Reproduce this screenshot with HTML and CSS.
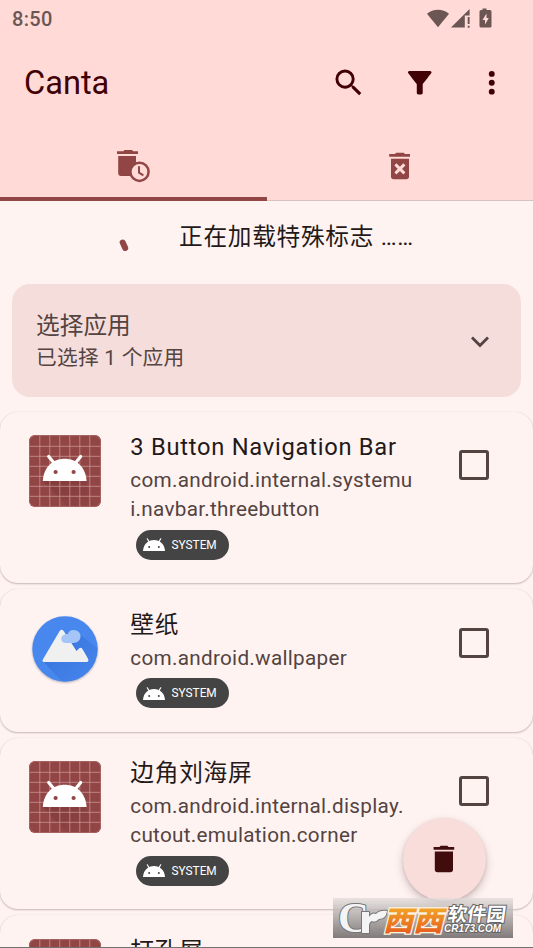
FILE: index.html
```html
<!DOCTYPE html>
<html lang="zh-CN">
<head>
<meta charset="utf-8">
<title>Canta</title>
<link rel="stylesheet" href="styles.css">
</head>
<body>
<svg class="defs" aria-hidden="true">
  <defs>
    <linearGradient id="orange" x1="0" y1="0" x2="0" y2="1"><stop offset="0" stop-color="#f6c02d"/><stop offset="1" stop-color="#e4501c"/></linearGradient>
    <linearGradient id="shade" x1="0" y1="0" x2="1" y2="1"><stop offset="0" stop-color="#591f22" stop-opacity=".45"/><stop offset="1" stop-color="#591f22" stop-opacity="0"/></linearGradient>
    <linearGradient id="cast" gradientUnits="userSpaceOnUse" x1="20" y1="22" x2="62" y2="64"><stop offset="0" stop-color="#2459c0" stop-opacity=".5"/><stop offset="1" stop-color="#2d67d2" stop-opacity=".1"/></linearGradient>
    <clipPath id="disc"><circle cx="36" cy="36" r="32.7"/></clipPath>
    <symbol id="robot" viewBox="0 0 72 72">
      <rect width="72" height="72" rx="6" fill="#914545"/>
      <path d="M14 46 27 60 39 72H66L57 46z" fill="url(#shade)" opacity=".6"/>
      <path d="M10.800 0V72M20.800 0V72M30.800 0V72M40.800 0V72M50.800 0V72M60.800 0V72M0 11.300H72M0 21.300H72M0 31.300H72M0 41.300H72M0 51.300H72M0 61.300H72" stroke="#d6a9a6" stroke-width=".8" opacity=".8"/>
      <rect x=".5" y=".5" width="71" height="71" rx="6" fill="none" stroke="#a86a68" stroke-width=".8"/>
      <path d="M13.800 46C14.500 32 24 23.700 35.700 23.700S56.800 32 57.600 46z" fill="#fff"/>
      <path d="M19.700 21.500 25.500 28.500M51.700 21.500 46 28.500" stroke="#fff" stroke-width="3.200" stroke-linecap="round"/>
      <circle cx="26.600" cy="37" r="2.100" fill="#914545"/><circle cx="44.600" cy="37" r="2.100" fill="#914545"/>
    </symbol>
    <symbol id="mini" viewBox="0 0 22 13">
      <path d="M0 13C.5 6 5 2 11 2s10.500 4 11 11z" fill="#fff"/>
      <path d="M4.300 .8 6.300 4.200M17.700 .8 15.700 4.200" stroke="#fff" stroke-width="1.200" stroke-linecap="round"/>
      <circle cx="6.200" cy="8.900" r="1" fill="#444"/><circle cx="15.800" cy="8.900" r="1" fill="#444"/>
    </symbol>
  </defs>
</svg>
<div class="screen">
  <header class="top">
    <div class="status">
      <span>8:50</span>
      <svg width="68" height="22" viewBox="0 0 68 22" fill="#6b5654">
        <path d="M1 6.800C7 1.400 17 1.400 23 6.800L12 20.200z"/>
        <path d="M25 20.500 43.600 2v6.600H38.800V20.500zM41.700 10H43.600V17H41.700zM41.700 18.700H43.600V20.700H41.700z"/>
        <path d="M56.500 1.500H60.500V3H64Q65.500 3 65.500 4.500V19Q65.500 20.500 64 20.500H55Q53.500 20.500 53.500 19V4.500Q53.500 3 55 3H56.500z"/>
        <path d="M60.500 6.500 56.500 13H59V17.500L62.800 11H60.500z" fill="#ffdad7"/>
      </svg>
    </div>
    <div class="bar">
      <h1>Canta</h1>
      <svg class="act" viewBox="0 0 24 24"><path d="M15.500 14h-.79l-.28-.27A6.470 6.470 0 0 0 16 9.500 6.500 6.500 0 1 0 9.500 16c1.610 0 3.090-.59 4.230-1.570l.27.28v.79l5 4.990L20.490 19l-4.990-5zm-6 0C7.010 14 5 11.990 5 9.500S7.010 5 9.500 5 14 7.010 14 9.500 11.990 14 9.500 14z"/></svg>
      <svg class="act" viewBox="0 0 24 24"><path d="M4.250 5.610C6.270 8.200 10 13 10 13v6c0 .55.45 1 1 1h2c.55 0 1-.45 1-1v-6s3.720-4.800 5.740-7.390A1 1 0 0 0 18.950 4H5.040a1 1 0 0 0-.79 1.610z"/></svg>
      <svg class="act" viewBox="0 0 24 24"><circle cx="12" cy="6" r="2"/><circle cx="12" cy="12" r="2"/><circle cx="12" cy="18" r="2"/></svg>
    </div>
    <nav class="tabs">
      <div class="tab active">
        <svg width="36" height="36" viewBox="0 0 36 36">
          <path d="M2 3.200H8.200L9.500 2h7.500l1.300 1.200H23V6H2zM3.200 8H21v7C17 17 15 20 15 24q0 2 .8 4H6Q3.200 28 3.200 25z" fill="#914545"/>
          <circle cx="24.500" cy="23.800" r="9.100" fill="none" stroke="#914545" stroke-width="2.500"/>
          <path d="M24 18.200V24.600L28.400 27.300" fill="none" stroke="#914545" stroke-width="2"/>
        </svg>
      </div>
      <div class="tab">
        <svg width="24" height="30" viewBox="0 0 24 30">
          <path d="M1.200 3.100H7L8.200 1.700h7.500L17 3.100h5V5.800H1.200zM3 7.700H21V25.500Q21 28.200 18.300 28.200H5.700Q3 28.200 3 25.500z" fill="#914545"/>
          <path d="M7.400 13.400 16.400 22.400M16.400 13.400 7.400 22.400" stroke="#ffdad7" stroke-width="2.900"/>
        </svg>
      </div>
    </nav>
  </header>
  <main>
    <div class="loading">
      <svg width="12" height="16" viewBox="0 0 12 16"><path d="M4.700 5.500 7.200 11" stroke="#914545" stroke-width="6" stroke-linecap="round"/></svg>
      <span>正在加载特殊标志 ……</span>
    </div>
    <section class="select">
      <div><div class="s1">选择应用</div><div class="s2">已选择 1 个应用</div></div>
      <svg width="20" height="14" viewBox="0 0 20 14"><path d="M2 2.500 10 10.500 18 2.500" fill="none" stroke="#534341" stroke-width="2.800"/></svg>
    </section>
    <div class="list">
      <article class="card">
        <svg class="icon"><use href="#robot"/></svg>
        <div class="info"><h2>3 Button Navigation Bar</h2><p>com.android.internal.systemu<br>i.navbar.threebutton</p><span class="chip"><svg><use href="#mini"/></svg>SYSTEM</span></div>
        <span class="check"></span>
      </article>
      <article class="card">
        <svg class="icon paper" viewBox="0 0 72 72">
          <circle cx="36" cy="36" r="32.700" fill="#4787ee"/>
          <g clip-path="url(#disc)"><path d="M14 48 36 72H72V38L49 20 36 24z" fill="url(#cast)"/></g>
          <path d="M14 46.200 30.500 18.200Q32.600 15.500 34.800 18.200L47.500 38 50 35.500Q52 33.800 53.600 36.200L59.200 46Q60 49 57.500 49H15.500Q12.500 49 14 46.200z" fill="#f0f0f0"/>
          <path d="M37 30H44C54 30 54 17 44.500 17 41 17 39.500 19 39 21 31 20 30 30 37 30z" fill="#a5c5f8"/>
        </svg>
        <div class="info"><h2>壁纸</h2><p>com.android.wallpaper</p><span class="chip"><svg><use href="#mini"/></svg>SYSTEM</span></div>
        <span class="check"></span>
      </article>
      <article class="card">
        <svg class="icon"><use href="#robot"/></svg>
        <div class="info"><h2>边角刘海屏</h2><p>com.android.internal.display.<br>cutout.emulation.corner</p><span class="chip"><svg><use href="#mini"/></svg>SYSTEM</span></div>
        <span class="check"></span>
      </article>
      <article class="card">
        <svg class="icon"><use href="#robot"/></svg>
        <div class="info"><h2>打孔屏</h2></div>
        <span class="check"></span>
      </article>
    </div>
  </main>
  <button class="fab" aria-label="卸载">
    <svg width="24" height="30" viewBox="0 0 24 30"><path d="M1.600 3H7.500L8.600 1.700h6.800L16.500 3h5.700V5.800H1.600zM2.800 7.600H21V25.500Q21 28.200 18.300 28.200H5.500Q2.800 28.200 2.800 25.500z" fill="#400c0c"/></svg>
  </button>
  <div class="mark">
    <svg width="180" height="40" viewBox="0 0 180 40">
      <g stroke="#777" stroke-width="2" paint-order="stroke" stroke-linejoin="round" fill="#f4f4f4">
        <text x="5" y="34" class="m-c" textLength="31" lengthAdjust="spacingAndGlyphs">C</text>
        <path d="M29 14h7v5q3-5 7-3 4-4 11-3-1 8-8 8-4 4-7 2-3 1-3 5v7h-7z"/>
      </g>
      <g class="m-o" transform="translate(50 32.500) skewX(-14)"><text x="0" y="0" textLength="60" lengthAdjust="spacingAndGlyphs">西西</text></g>
      <g class="m-w" transform="translate(114 23) skewX(-8)"><text x="0" y="0" textLength="58" lengthAdjust="spacingAndGlyphs">软件园</text></g>
      <text x="111" y="33.500" class="m-u" textLength="57" lengthAdjust="spacingAndGlyphs">CR173.COM</text>
    </svg>
  </div>
</div>
</body>
</html>
```
FILE: styles.css
```css
* { box-sizing: border-box; }
body { margin: 0; font-family: Roboto, "Noto Sans CJK SC", sans-serif; }
.defs { position: absolute; width: 0; height: 0; }
.screen { position: relative; width: 533px; height: 948px; overflow: hidden; background: #fff3f2; color: #231918; border-bottom: 1px solid #77706f; }
svg { display: block; flex: none; }
.top { height: 201px; background: #ffdad7; border-bottom: 1px solid #d8c2c0; }
.status { height: 36px; display: flex; justify-content: space-between; padding: 7px 39px 0 12px; font-size: 20px; line-height: 25px; font-weight: 500; color: #6b5654; letter-spacing: .3px; }
.status svg { margin-top: -.5px; }
.bar { height: 93px; margin-bottom: 2px; display: flex; align-items: center; padding: 0 24px; color: #410004; }
.bar h1 { flex: 1; margin: 0; font-size: 32.6px; font-weight: 400; line-height: 40px; }
.act { width: 35.5px; height: 35.5px; margin-left: 35.6px; fill: #410004; }
.tabs { display: flex; height: 70px; }
.tab { flex: 1; display: flex; justify-content: center; align-items: center; }
.active { border-bottom: 4px solid #914545; padding-top: 4px; }
.loading { height: 83px; display: flex; align-items: flex-start; padding: 19px 0 0 118px; font-size: 23.7px; line-height: 35px; letter-spacing: .7px; }
.loading svg { margin-top: 17px; }
.loading span { margin-left: 49px; }
.select { margin: 0 12px; height: 113px; border-radius: 18px; background: #f4dddb; color: #534341; display: flex; justify-content: space-between; align-items: center; padding: 2px 31px 0 24px; }
.s1 { font-size: 23.7px; line-height: 35.5px; }
.s2 { font-size: 20.7px; line-height: 29.6px; letter-spacing: .28px; }
.list { display: flex; flex-direction: column; gap: 5.9px; margin-top: 14.6px; }
.card { display: flex; align-items: flex-start; padding: 17.8px 44px 17.8px 29px; border-radius: 18px; background: #fff3f2; box-shadow: 0 1px 2px rgba(60,30,30,.28), 0 0 1px rgba(60,30,30,.15); }
.icon { width: 72px; height: 72px; margin-top: 5.7px; }
.info { width: 300px; margin-left: 29.3px; }
.info h2 { margin: 0; padding-top: 1px; font-size: 23.7px; line-height: 35.5px; font-weight: 400; letter-spacing: .74px; white-space: nowrap; }
.info p { margin: 0 0 -1px; font-size: 20.7px; line-height: 29.6px; letter-spacing: .29px; color: #534341; white-space: nowrap; }
.paper { filter: drop-shadow(0 1px 1px rgba(40,50,80,.35)); }
.chip { display: flex; align-items: center; width: 92.5px; height: 29.8px; margin: 5.9px; padding-left: 7px; gap: 6.300px; border-radius: 15px; background: #444; color: #fff; font-size: 11.85px; }
.chip svg { width: 22px; height: 13px; }
.check { width: 30px; height: 30px; margin: 20.5px 0 0 auto; border: 3px solid #534341; border-radius: 3px; }
.fab { position: absolute; left: 402.5px; top: 817.5px; width: 83px; height: 83px; padding: 0; border: 0; border-radius: 50%; background: #f9dddb; display: flex; align-items: center; justify-content: center; box-shadow: 0 4px 8px rgba(60,30,30,.25), 0 1px 3px rgba(60,30,30,.12); }
.mark { position: absolute; left: 333px; top: 898px; width: 180px; height: 40px; background: linear-gradient(rgba(225,220,219,.75), #807b7a); }
.m-c { font: 700 42px "Liberation Serif", serif; }
.m-o { font: 900 28px "Noto Sans CJK SC", sans-serif; fill: url(#orange); stroke: #fff4e0; stroke-width: 2.5px; paint-order: stroke; }
.m-w { font: 700 19px "Noto Sans CJK SC", sans-serif; fill: #fff; stroke: #666; stroke-width: 2px; paint-order: stroke; }
.m-u { font: italic 700 10px "Liberation Sans", sans-serif; fill: #fff; stroke: #666; stroke-width: 2px; paint-order: stroke; }
```
